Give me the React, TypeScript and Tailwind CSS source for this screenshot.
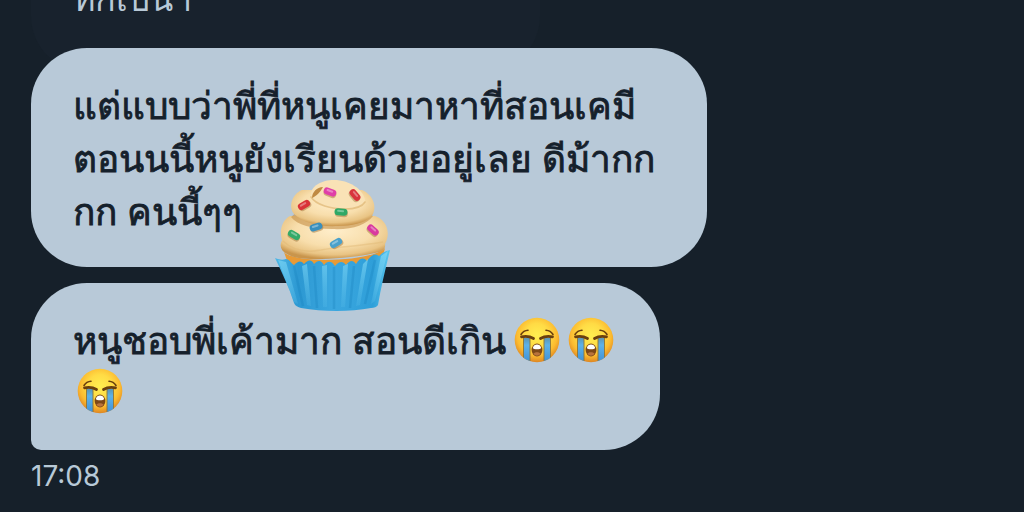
import { FC, ReactNode } from "react";

interface BubbleProps {
  children: ReactNode;
  className?: string;
}

const Bubble: FC<BubbleProps> = ({ children, className = "" }) => (
  <div
    className={`max-w-full rounded-[56px] pt-[30px] pl-[42px] leading-[53px] font-medium ${className}`}
  >
    {children}
  </div>
);

const CryingEmoji: FC = () => (
  <svg
    viewBox="0 0 46 46"
    role="img"
    aria-label="Loudly crying face"
    className="size-[46px] shrink-0"
  >
    <defs>
      <radialGradient id="face" cx="50%" cy="40%" r="60%">
        <stop offset="0" stopColor="#ffee50" />
        <stop offset="0.45" stopColor="#ffdb45" />
        <stop offset="0.75" stopColor="#fcbb30" />
        <stop offset="1" stopColor="#dd8522" />
      </radialGradient>
      <linearGradient id="tear" x1="0" x2="0" y1="0" y2="1">
        <stop offset="0" stopColor="#5c93b0" />
        <stop offset="0.3" stopColor="#5fb2e8" />
        <stop offset="1" stopColor="#3d8fd6" />
      </linearGradient>
      <clipPath id="faceClip">
        <circle cx="23" cy="23" r="22.3" />
      </clipPath>
    </defs>
    <circle cx="23" cy="23" r="22.3" fill="url(#face)" />
    <g clipPath="url(#faceClip)">
      <path d="M9.5 20.5h6.5V46H9.5zM30 20.5h6.5V46H30z" fill="url(#tear)" />
      <path d="M9.5 21v25M16 21v25M30 21v25M36.5 21v25" stroke="#8d7434" strokeWidth="0.9" />
    </g>
    <g fill="none" stroke="#6a3f0e" strokeLinecap="round">
      <path d="M7 17.5c1.8-2.8 4-4 7-4.2" strokeWidth="1.6" />
      <path d="M39 17.5c-1.8-2.8-4-4-7-4.2" strokeWidth="1.6" />
      <path d="M7.5 19.8c4-.8 8-.8 12 1.7M26.5 21.5c4-2.5 8-2.5 12-1.7" strokeWidth="2.8" />
    </g>
    <ellipse cx="23" cy="33" rx="5.4" ry="6.4" fill="#7d4817" />
    <path d="M18.8 31c1-4.6 7.4-4.6 8.4 0-.5 1.8-7.9 1.8-8.4 0z" fill="#fff" />
    <path d="M19.4 36.5c2-1.8 5.2-1.8 7.2 0-1.8 3-5.4 3-7.2 0z" fill="#b9733c" />
  </svg>
);

const sprinkles = [
  { x: 70, y: 22, angle: 20, color: "#e03fa8" },
  { x: 95, y: 25, angle: 50, color: "#d8343d" },
  { x: 44, y: 35, angle: -30, color: "#d93237" },
  { x: 81, y: 42, angle: 5, color: "#2fa866" },
  { x: 56, y: 57, angle: -18, color: "#398fbd" },
  { x: 113, y: 60, angle: 42, color: "#d9399f" },
  { x: 34, y: 65, angle: 30, color: "#35aa68" },
  { x: 76, y: 73, angle: -30, color: "#4ba1cb" },
];

const Cupcake: FC = () => (
  <svg viewBox="0 0 150 150" role="img" aria-label="Cupcake" className="size-[150px]">
    <defs>
      <linearGradient id="wrapper" x1="0" x2="1" y1="0" y2="0">
        <stop offset="0" stopColor="#4db8e8" />
        <stop offset="0.2" stopColor="#2c98d2" />
        <stop offset="0.5" stopColor="#3ba7df" />
        <stop offset="0.85" stopColor="#2f9fd9" />
        <stop offset="1" stopColor="#59c7ef" />
      </linearGradient>
      <radialGradient id="cream" cx="50%" cy="34%" r="66%">
        <stop offset="0" stopColor="#ffeecb" />
        <stop offset="0.55" stopColor="#f8deac" />
        <stop offset="0.85" stopColor="#e9c484" />
        <stop offset="1" stopColor="#c9954c" />
      </radialGradient>
      <linearGradient id="pleat" x1="0" x2="0" y1="0" y2="1">
        <stop offset="0" stopColor="#7dd6f5" stopOpacity="0.8" />
        <stop offset="1" stopColor="#5fc3ed" stopOpacity="0.2" />
      </linearGradient>
    </defs>
    {/* sponge between frosting and wrapper */}
    <path d="M24 82c10 12 88 10 101-4l-6 24H31z" fill="#e79a36" />
    {/* frosting, from the lowest swirl up */}
    <path
      d="M30 46c-8 4-11 15-8 24-3 6-1 11 5 14 6 4 16 5 28 5 20 0 42-2 60-6 7-1 11-4 10-9 6-11 2-24-10-28z"
      fill="url(#cream)"
    />
    <path d="M31 47c6 8 21 12 41 12 20 1 34-4 41-13l-8-4H37z" fill="#c58f48" opacity="0.6" />
    <path
      d="M42 20c-10 4-14 17-8 24 9 9 26 13 44 12 14 0 26-3 33-9 7-8 3-22-9-27z"
      fill="url(#cream)"
    />
    <path
      d="M51 26c-1-10 11-16 23-16 15 0 29 9 31 20 0 6-8 9-18 9-14 0-32-4-36-13z"
      fill="#f9e2b6"
    />
    <path
      d="M51 27c5 8 20 12 34 12 9 0 17-2 20-7"
      fill="none"
      stroke="#d9ad68"
      strokeWidth="1.5"
      strokeLinecap="round"
      opacity="0.6"
    />
    <path d="M63 17c-6 0-11 5-11 11 4-2 8-5 11-11z" fill="#c08a43" />
    <path
      d="M23 71c9 9 22 12 38 9 18-4 34-3 62-8"
      fill="none"
      stroke="#dfb775"
      strokeWidth="1.5"
      opacity="0.45"
    />
    {sprinkles.map(({ x, y, angle, color }) => (
      <g key={`${x}-${y}`} transform={`translate(${x} ${y}) rotate(${angle})`}>
        <rect x="-6" y="-2" width="13" height="7" rx="3.5" fill="#9c6a30" opacity="0.45" />
        <rect x="-6.5" y="-3.5" width="13" height="7" rx="3.5" fill={color} />
        <rect x="-4" y="-2" width="7" height="2" rx="1" fill="#fff" opacity="0.35" />
      </g>
    ))}
    {/* pleated wrapper */}
    <path
      d="M15 88c5 2 8 2 11 1 3 0 5 4 8 6 4-4 7-5 10-1 4-4 7-5 10 0 4-4 7-4 10 1 4-5 8-4 11 1 4-5 8-5 11-1 4-5 7-5 10-1 4-6 7-7 11-3 4-6 8-8 12-5 4-4 7-5 11-6-4 17-9 37-12 55-1 2-4 3-7 3-21 4-48 4-70 0-3-1-6-2-7-5-5-16-12-30-19-45z"
      fill="url(#wrapper)"
    />
    <g fill="url(#pleat)">
      <path d="M18 90l8 2 12 42-4-2zM42 96l5-2 4 42-4-1zM62 96l5-1v42h-4zM83 96l5-2-3 43h-4zM103 94l5-5-8 46-4 1zM121 86l7-5-13 50-4 3z" />
    </g>
    <g fill="none" stroke="#1780bd" strokeWidth="2.5" opacity="0.3">
      <path d="M34 96l9 40M54 96l3 42M74 97v42M94 96l-4 42M115 90l-10 44" />
    </g>
  </svg>
);

export default function App() {
  return (
    <main
      lang="th"
      className="min-h-screen overflow-hidden bg-[#16202a] font-['Noto_Sans','Liberation_Sans',sans-serif] text-[#15202b]"
    >
      <div className="relative -mt-[58px] flex flex-col items-start pr-4 pl-[31px]">
        <Bubble className="-mb-6 w-[509px] bg-[#18222d] pb-[47px] text-[34px] text-[#b8c9d7]">
          <p>ทักเปนา</p>
        </Bubble>
        <Bubble className="mb-4 bg-[#b8c9d8] pr-[52px] pb-[30px] text-[37px] [-webkit-text-stroke:0.8px]">
          <p>
            แต่แบบว่าพี่ที่หนูเคยมาหาที่สอนเคมี
            <br />
            ตอนนนี้หนูยังเรียนด้วยอยู่เลย ดีม้ากก
            <br />
            กก คนนี้ๆๆ
          </p>
        </Bubble>
        <Bubble className="rounded-bl-[10px] bg-[#b8c9d8] pr-[46px] pb-[34px] text-[37px] [-webkit-text-stroke:0.8px]">
          <div className="flex items-center gap-2">
            <span>หนูชอบพี่เค้ามาก สอนดีเกิน</span>
            <CryingEmoji />
            <CryingEmoji />
          </div>
          <div className="flex h-[50px] items-center pl-1">
            <CryingEmoji />
          </div>
        </Bubble>
        <time className="mt-1 font-[Inter,sans-serif] text-[28px] leading-[44px] text-[#b8c9d7]">
          17:08
        </time>
        {/* sticker laid over both bubbles */}
        <div className="absolute top-[228px] left-[260px]">
          <Cupcake />
        </div>
      </div>
    </main>
  );
}
